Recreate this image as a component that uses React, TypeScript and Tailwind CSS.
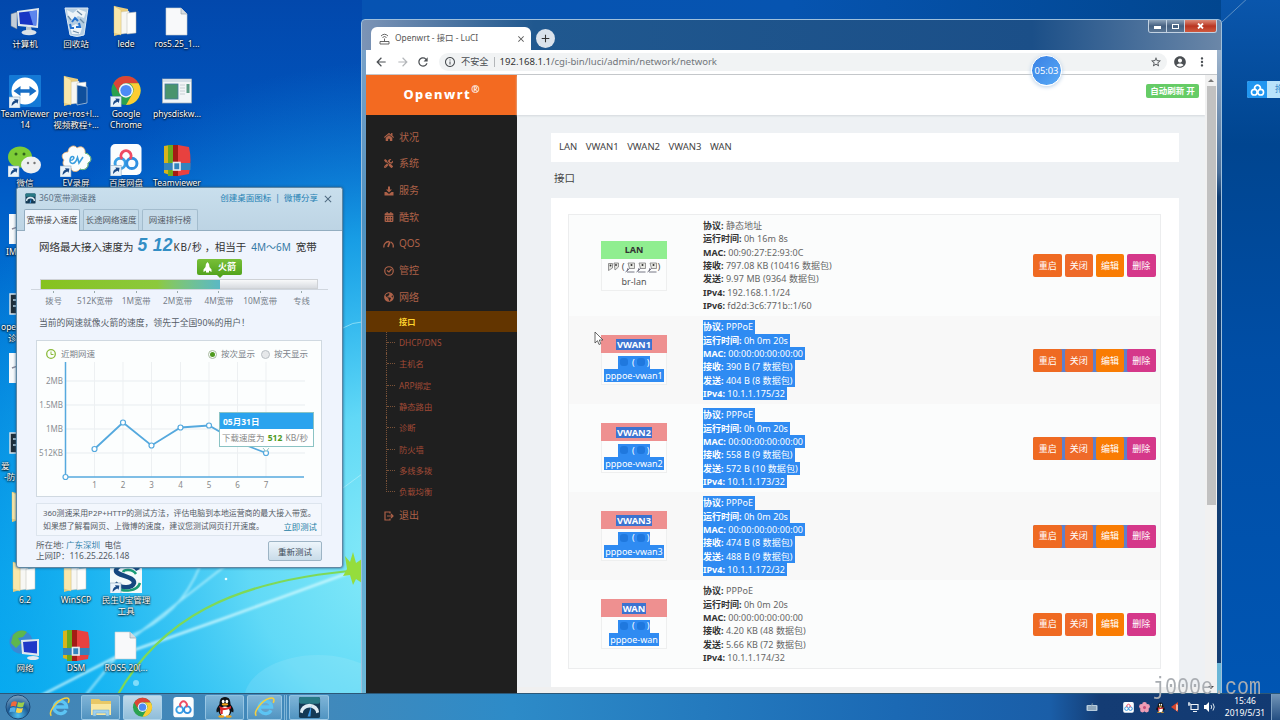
import React from "react";
import { MdArrowBack, MdArrowForward, MdRefresh, MdInfoOutline, MdStarBorder, MdAccountCircle, MdMoreVert, MdClose, MdAdd } from "react-icons/md";
import { FaHome, FaTools, FaCalendarAlt, FaGlobeAmericas } from "react-icons/fa";

/* ---------- drawings ---------- */

function Shortcut() {
  return (
    <g>
      <rect x="0" y="22" width="11" height="11" fill="#e9f3fb" stroke="#8aa5bd" strokeWidth=".6" />
      <path d="M2.6 31c0-3 1-4.700 3.200-5.200L5 24.200l4.400.2-.8 4.400-1.200-1.300c-1.700.4-2.700 1.500-4.800 3.500z" fill="#1a4a86" />
    </g>
  );
}

function Computer() {
  return (
    <svg width="32" height="32" viewBox="0 0 32 32">
      <path d="M2 9l6-2v17l-6-3z" fill="#c3ced8" stroke="#66788c" strokeWidth=".5" />
      <path d="M8 6l22-3-1 20-20-2z" fill="#dfe8ef" />
      <path d="M10 7.500l18-2-.8 15L11 19z" fill="#1734c4" />
      <path d="M20 6.300l8-.8-.8 15-3-.3z" fill="#5c86ee" />
      <path d="M17 22h5l1 4h-6z" fill="#b8c2cc" />
      <ellipse cx="20" cy="27.500" rx="7.500" ry="2.800" fill="#dbe2e8" />
    </svg>
  );
}

function Recycle() {
  return (
    <svg width="32" height="32" viewBox="0 0 32 32">
      <path d="M5 3h23l-4 27q-7 3-14 0z" fill="#b4cde2" stroke="#dceaf5" strokeWidth="1" />
      <path d="M7 5l6 3 5-4 8 3-2 6-6-2-5 4-5-3zM10 22l6-3 6 4-2 6h-8z" fill="#eef4f8" />
      <path d="M8 11l3 4M20 14l4 4M13 26l6 2M17 6l5 4" stroke="#6d8da8" strokeWidth="1.300" />
      <path d="M12 17l3-4 3 3M19 18l1 4h-4M14 23h-3l-1-4" fill="none" stroke="#2472d0" strokeWidth="2" />
    </svg>
  );
}

function Folder({ blue = false }: { blue?: boolean }) {
  return (
    <svg width="32" height="32" viewBox="0 0 32 32">
      <path d="M4 1l14 3v23l-14 4z" fill="#e9cd7e" />
      <path d="M11 7l8-1 1 22-9 1z" fill="#f7f7f4" stroke="#c8c4b4" strokeWidth=".4" />
      <path d="M17 8l9-1v21l-9 1z" fill="#fdfdfb" stroke="#b9b8b0" strokeWidth=".5" />
      {blue && <path d="M17 10l10 2v16l-10 2z" fill="#0f4f9c" stroke="#d0dce8" strokeWidth=".6" />}
      <path d="M4 1l7 4v25l-7-2z" fill="#f8e7ab" stroke="#d9bd68" strokeWidth=".4" />
    </svg>
  );
}

function Page() {
  return (
    <svg width="32" height="32" viewBox="0 0 32 32">
      <path d="M5 3h15l6 6v21H5z" fill="#f8f9fa" stroke="#c6ccd2" strokeWidth=".6" />
      <path d="M20 3v6h6" fill="#d7dce0" stroke="#8f9aa5" strokeWidth=".6" />
    </svg>
  );
}

function TeamViewer() {
  return (
    <svg width="32" height="33" viewBox="0 0 32 33">
      <rect x="0" y="0" width="32" height="32" rx="1" fill="#1479d6" />
      <circle cx="16" cy="16" r="13.500" fill="#fff" />
      <path d="M4.500 16l7-5v3.200h9V11l7 5-7 5v-3.200h-9V21z" fill="#176ec6" />
      <Shortcut />
    </svg>
  );
}

function ChromeLogo({ size = 32, shortcut = false }: { size?: number; shortcut?: boolean }) {
  return (
    <svg width={size} height={size} viewBox="0 0 32 33">
      <circle cx="16" cy="16" r="15" fill="#2aa24f" />
      <path d="M3 8.500A15 15 0 0 1 29 8.500H16a7.500 7.500 0 0 0-6.600 11z" fill="#dc4437" />
      <path d="M29 8.500A15 15 0 0 1 16 31l6.500-11.300A7.500 7.500 0 0 0 19 8.500z" fill="#fccd34" />
      <circle cx="16" cy="16" r="7.400" fill="#f2f6f6" />
      <circle cx="16" cy="16" r="5.800" fill="#4c8bf5" />
      {shortcut && <Shortcut />}
    </svg>
  );
}

function DiskApp() {
  return (
    <svg width="32" height="32" viewBox="0 0 32 32">
      <rect x="1.500" y="4" width="29" height="24" fill="#f2f5f7" stroke="#a4afb8" strokeWidth=".7" />
      <rect x="2" y="4.500" width="28" height="2.500" fill="#d5dfe8" />
      <rect x="4" y="9" width="13" height="15" fill="#4a946e" stroke="#477aa0" strokeWidth=".8" />
      <rect x="25.500" y="9" width="3" height="9" fill="#5a9a83" />
      <path d="M19 10h5M19 13h5M19 16h5M19 19h5" stroke="#bcc5cc" strokeWidth=".8" />
    </svg>
  );
}

function WeChat() {
  return (
    <svg width="34" height="33" viewBox="0 0 34 33">
      <ellipse cx="12" cy="13" rx="12" ry="10.500" fill="#7ccc36" />
      <circle cx="8" cy="10" r="1.500" fill="#31651c" />
      <circle cx="16" cy="10" r="1.500" fill="#31651c" />
      <ellipse cx="23" cy="21" rx="10" ry="8.500" fill="#eef0f1" />
      <circle cx="20" cy="19" r="1.200" fill="#777" />
      <circle cx="26.500" cy="19" r="1.200" fill="#777" />
      <Shortcut />
    </svg>
  );
}

function EvApp() {
  return (
    <svg width="32" height="33" viewBox="0 0 32 33">
      <path d="M8 8c0-6 7-8 9-4 4-3 9 0 8 5 6 1 8 8 3 10 1 5-4 8-8 6-3 4-9 3-9-1-6 1-10-4-7-8-4-4-1-8 4-8z" fill="#fbfdfd" stroke="#f2b26b" strokeWidth=".8" />
      <path d="M25 9c6 1 8 8 3 10 1 5-4 8-8 6" fill="none" stroke="#4fb889" strokeWidth="1" />
      <path d="M10 16.500c4 0 5-4 2.500-4s-4 7 0 7c3 0 4-3 5-6l1.500 5.500 4-6" fill="none" stroke="#3b9ede" strokeWidth="1.600" />
      <Shortcut />
    </svg>
  );
}

function BaiduMark({ mono = false }: { mono?: boolean }) {
  return (
    <g fill="none" strokeWidth="3">
      <circle cx="10" cy="20" r="5.300" stroke={mono ? "#fff" : "#3aa0e6"} />
      <circle cx="22" cy="20" r="5.300" stroke={mono ? "#fff" : "#2f8fe0"} />
      <path d="M12 15.500a5.200 5.200 0 1 1 8 0" stroke={mono ? "#fff" : "#ee4a62"} />
    </g>
  );
}

function Baidu({ size = 32, shortcut = false }: { size?: number; shortcut?: boolean }) {
  return (
    <svg width={size} height={size} viewBox="0 0 32 33">
      <rect width="32" height="32" rx="5" fill="#fbfdfe" />
      <BaiduMark />
      {shortcut && <Shortcut />}
    </svg>
  );
}

function Archive() {
  return (
    <svg width="32" height="33" viewBox="0 0 32 33">
      <path d="M3 2l6-1v30l-6-2z" fill="#d8b41c" />
      <path d="M7 1h6v31H7z" fill="#6da91e" />
      <path d="M12 1h5v31h-5z" fill="#a41c14" />
      <path d="M17 1l11 2q3 13 0 27l-11 2z" fill="#e8413f" />
      <path d="M3 19h26.500v7H3z" fill="#3284bd" />
      <rect x="12.500" y="18.500" width="6.500" height="7.500" fill="none" stroke="#e9edf0" strokeWidth="1.600" />
    </svg>
  );
}

function SBank() {
  return (
    <svg width="32" height="32" viewBox="0 0 32 32">
      <rect width="32" height="32" fill="#f4fafb" />
      <path d="M28 9c-4-7-20-7-22 0-1 6 19 6 18 13-2 6-14 5-19 0" fill="none" stroke="#15477f" strokeWidth="4.500" />
      <path d="M26 13c-3-5-12-5-13-2M30 22c-3 9-17 9-22 5" fill="none" stroke="#1b9c76" strokeWidth="2.500" />
      <Shortcut />
    </svg>
  );
}

function Network() {
  return (
    <svg width="32" height="32" viewBox="0 0 32 32">
      <circle cx="12" cy="13" r="11.500" fill="#3a88d4" />
      <path d="M4 6q7-7 14-3l-4 5-5 1 3 5-5 5-5-5z" fill="#5eb74d" />
      <path d="M12 11l18-1v17l-17-2z" fill="#dfe8ee" />
      <path d="M14 13l14-1v12.500l-13-1.500z" fill="#2038c8" />
      <ellipse cx="24" cy="29" rx="6" ry="2" fill="#e3e9ed" />
    </svg>
  );
}

function DarkApp() {
  return (
    <svg width="32" height="32" viewBox="0 0 32 32">
      <rect x="1" y="6" width="29" height="20" fill="#1e2d38" stroke="#d6e2ea" strokeWidth="1.500" />
      <path d="M4 12h20M4 18h20" stroke="#96b0c0" strokeWidth="2" />
    </svg>
  );
}

function WhiteApp() {
  return (
    <svg width="32" height="32" viewBox="0 0 32 32">
      <rect x="0" y="1" width="31" height="30" fill="#f6f9fb" />
      <path d="M3 16q6-3 12 0" stroke="#889" strokeWidth="1.500" fill="none" />
    </svg>
  );
}

function IeLogo() {
  return (
    <svg width="22" height="22" viewBox="0 0 24 24">
      <path d="M18.500 15.500A6.800 6.800 0 1 1 19.200 12H6.800" fill="none" stroke="#5cc4f4" strokeWidth="3.600" />
      <path d="M2.500 21.500C-1 18 8 5 17 2.500c5-1.400 5.500 1.500 4 5" fill="none" stroke="#f4cf3e" strokeWidth="1.700" />
    </svg>
  );
}

function Explorer() {
  return (
    <svg width="24" height="22" viewBox="0 0 24 22">
      <path d="M2 3h8l2 2h10v14H2z" fill="#e8c866" />
      <path d="M2 8h20v11H2z" fill="#f9e7a0" />
      <path d="M4 20v-6h16v6h-3v-3H7v3z" fill="#9fd0ee" stroke="#6aa8cf" strokeWidth=".5" />
    </svg>
  );
}

function Penguin({ size = 22 }: { size?: number }) {
  return (
    <svg width={size} height={size} viewBox="0 0 24 24">
      <path d="M12 1c-5 0-6 4-6 8-3 4-4 6-3 9l2-1c1 4 3 5 7 5s6-1 7-5l2 1c1-3 0-5-3-9 0-4-1-8-6-8z" fill="#0e1216" />
      <ellipse cx="12" cy="17" rx="5.200" ry="5.500" fill="#fff" />
      <ellipse cx="10" cy="6" rx="1.500" ry="2" fill="#fff" />
      <ellipse cx="14" cy="6" rx="1.500" ry="2" fill="#fff" />
      <ellipse cx="12" cy="9.200" rx="3.500" ry="1.200" fill="#f3a51c" />
      <path d="M5.500 11q6.500 4 13 0v2.500q-5 2-9 2v4H7v-4.500z" fill="#e0272a" />
      <ellipse cx="8" cy="22.300" rx="3.400" ry="1.300" fill="#f3a51c" />
      <ellipse cx="16" cy="22.300" rx="3.400" ry="1.300" fill="#f3a51c" />
    </svg>
  );
}

function Gauge({ size = 22 }: { size?: number }) {
  return (
    <svg width={size} height={size} viewBox="0 0 24 24">
      <rect x="1" y="1" width="22" height="22" rx="2" fill="#143a55" />
      <rect x="1" y="1" width="22" height="7" rx="2" fill="#287a86" />
      <path d="M2 17a10 9 0 0 1 20 0l-3 1a7 6 0 0 0-14 0z" fill="#dcebf2" />
      <path d="M14 10L10 21.500h3z" fill="#3d9be8" />
    </svg>
  );
}

function StartOrb() {
  return (
    <svg width="26" height="26" viewBox="0 0 26 26">
      <defs>
        <radialGradient id="orb" cx=".5" cy=".85" r=".9">
          <stop offset="0" stopColor="#4fc0f0" />
          <stop offset=".5" stopColor="#1c5a94" />
          <stop offset="1" stopColor="#8fb0c8" />
        </radialGradient>
      </defs>
      <circle cx="13" cy="13" r="12" fill="url(#orb)" stroke="#1d4a78" />
      <path d="M6.500 8.500q3-2 5.500-.5l-1 4.500q-3-1-5.500.3z" fill="#f0683a" />
      <path d="M13 8q3 1.500 6.500 0l-1.300 4.700q-3 1.300-6.200-.2z" fill="#9cce4a" />
      <path d="M5.200 14q3-1.500 5.500-.3l-1 4.400q-3-1-5.500.4z" fill="#54aee8" />
      <path d="M11.800 13.800q3 1.400 6.200.2l-1.200 4.300q-3 1.200-6-.1z" fill="#fbd24a" />
    </svg>
  );
}

/* ---------- desktop ---------- */

function Wallpaper() {
  return (
    <svg className="absolute inset-0" width="1280" height="720" viewBox="0 0 1280 720">
      <defs>
        <linearGradient id="sky" x1="0" y1="0" x2="0" y2="1">
          <stop offset="0" stopColor="#0248ac" />
          <stop offset=".25" stopColor="#0059c4" />
          <stop offset=".5" stopColor="#0080dc" />
          <stop offset=".8" stopColor="#00a2ee" />
          <stop offset="1" stopColor="#00b0f4" />
        </linearGradient>
        <radialGradient id="glow" gradientUnits="userSpaceOnUse" cx="400" cy="560" r="500">
          <stop offset="0" stopColor="#88ecf8" />
          <stop offset=".3" stopColor="#66dcf7" stopOpacity=".95" />
          <stop offset=".65" stopColor="#24baf2" stopOpacity=".65" />
          <stop offset="1" stopColor="#1090e0" stopOpacity="0" />
        </radialGradient>
        <linearGradient id="east" x1="0" y1="0" x2="0" y2="1">
          <stop offset="0" stopColor="#0a56ac" />
          <stop offset=".2" stopColor="#004590" />
          <stop offset=".5" stopColor="#004ea6" />
          <stop offset="1" stopColor="#0056b4" />
        </linearGradient>
        <linearGradient id="top" x1="0" y1="0" x2="1" y2="0">
          <stop offset="0" stopColor="#0653b2" />
          <stop offset=".5" stopColor="#0654b0" />
          <stop offset="1" stopColor="#01468f" />
        </linearGradient>
        <filter id="soft"><feGaussianBlur stdDeviation="1.200" /></filter>
      </defs>
      <rect width="1280" height="720" fill="url(#sky)" />
      <rect width="1280" height="720" fill="url(#glow)" />
      <rect x="362" width="860" height="60" fill="url(#top)" />
      <rect x="1221" width="59" height="720" fill="url(#east)" />
      <path d="M1222 22L1250 -4" stroke="#5c8fc4" strokeWidth="1" />
      <g filter="url(#soft)">
        <path d="M40 696L120 655L225 618L362 568" stroke="#d8fbff" strokeOpacity=".8" strokeWidth="2.500" fill="none" />
        <path d="M85 696L130 640L225 566M130 636q50-20 70-70" stroke="#c5f6ff" strokeOpacity=".7" strokeWidth="2" fill="none" />
      </g>
      <path d="M117 696C160 620 230 580 362 570" stroke="#7ed957" strokeWidth="2.200" fill="none" />
      <path d="M345 556l5 6 3-10 3 11 6-4v24l-6-4-3 6-3-10-7 1 4-7z" fill="#95dd3c" />
      <ellipse cx="318" cy="700" rx="74" ry="45" fill="#fff" fillOpacity=".1" />
      <circle cx="226" cy="579" r="1.300" fill="#eaffff" />
      <circle cx="136" cy="683" r="3" fill="#bff4ff" fillOpacity=".6" />
      <path d="M343 328q10-6 19-6M343 488l19-14" stroke="#baf2fa" strokeOpacity=".6" fill="none" />
    </svg>
  );
}

type IconItem = { x: number; y: number; icon: React.ReactNode; label: string; label2?: string; left?: [number, number] };

const icons: IconItem[] = [
  { x: 25, y: 5, icon: <Computer />, label: "计算机" },
  { x: 76, y: 5, icon: <Recycle />, label: "回收站" },
  { x: 126, y: 5, icon: <Folder />, label: "lede" },
  { x: 177, y: 5, icon: <Page />, label: "ros5.25_1..." },
  { x: 25, y: 75, icon: <TeamViewer />, label: "TeamViewer", label2: "14" },
  { x: 76, y: 75, icon: <Folder blue />, label: "pve+ros+l...", label2: "视频教程+..." },
  { x: 126, y: 75, icon: <ChromeLogo shortcut />, label: "Google", label2: "Chrome" },
  { x: 177, y: 75, icon: <DiskApp />, label: "physdiskw..." },
  { x: 25, y: 144, icon: <WeChat />, label: "微信" },
  { x: 76, y: 144, icon: <EvApp />, label: "EV录屏" },
  { x: 126, y: 144, icon: <Baidu shortcut />, label: "百度网盘" },
  { x: 177, y: 144, icon: <Archive />, label: "Teamviewer" },
  { x: 25, y: 213, icon: <WhiteApp />, label: "IM", left: [6, 0] },
  { x: 25, y: 288, icon: <DarkApp />, label: "ope", label2: "诊", left: [1, 8] },
  { x: 25, y: 352, icon: <WhiteApp />, label: "" },
  { x: 25, y: 427, icon: <DarkApp />, label: "爱", label2: "-防", left: [1, 4] },
  { x: 24, y: 491, icon: <Folder />, label: "" },
  { x: 25, y: 561, icon: <Folder />, label: "6.2" },
  { x: 76, y: 561, icon: <Folder />, label: "WinSCP" },
  { x: 126, y: 561, icon: <SBank />, label: "民生U宝管理", label2: "工具" },
  { x: 25, y: 629, icon: <Network />, label: "网络" },
  { x: 76, y: 629, icon: <Archive />, label: "DSM" },
  { x: 126, y: 629, icon: <Page />, label: "ROS5.20(..." },
];

function DesktopIcon({ item }: { item: IconItem }) {
  const pad = item.left;
  return (
    <div className="absolute flex w-[60px] flex-col items-center" style={{ left: item.x - 30, top: item.y - 1 }}>
      <div className="flex h-[34px] items-center justify-center">{item.icon}</div>
      <div className={(pad ? "w-[60px] text-left" : "text-center") + " text-[8.500px] leading-[11px] whitespace-nowrap text-white [text-shadow:0_1px_2px_#000,0_0_2px_#000]"}>
        <div style={pad && { paddingLeft: pad[0] + 5 }}>{item.label}</div>
        {item.label2 && <div style={pad && { paddingLeft: pad[1] + 5 }}>{item.label2}</div>}
      </div>
    </div>
  );
}

/* ---------- speed test window ---------- */

const ticks = ["拨号", "512K宽带", "1M宽带", "2M宽带", "4M宽带", "10M宽带", "专线"];
const points = [[57.5, 108], [86, 81.5], [114.5, 104.5], [143.5, 86.5], [172, 84.5], [200.5, 101], [229, 112]];

function Chart() {
  return (
    <svg className="absolute top-0 left-0 font-['Noto_Sans','Noto_Sans_CJK_SC',sans-serif]" width="284" height="155" viewBox="0 0 284 155">
      <path d="M28 40H268M28 64H268M28 88H268M28 112H268" stroke="#e8edf0" />
      <path d="M57.500 21V136M86 21V136M114.500 21V136M143.500 21V136M172 21V136M200.500 21V136M229 21V136" stroke="#edf0f2" />
      <path d="M28.500 21V136H267" fill="none" stroke="#55a9de" strokeWidth="1.500" />
      <polyline points={points.map((p) => p.join(",")).join(" ")} fill="none" stroke="#55a9de" strokeWidth="1.800" />
      {points.map((p, i) => (
        <g key={i}>
          <circle cx={p[0]} cy={p[1]} r="2.500" fill="#fff" stroke="#55a9de" strokeWidth="1.200" />
          <text x={p[0]} y="146.500" fontSize="8" fill="#888" textAnchor="middle">{i + 1}</text>
        </g>
      ))}
      <circle cx="28.500" cy="136" r="2.500" fill="#fff" stroke="#55a9de" strokeWidth="1.200" />
      <g fontSize="8" fill="#8a8f94" textAnchor="end">
        <text x="26" y="43">2MB</text>
        <text x="26" y="67">1.5MB</text>
        <text x="26" y="91">1MB</text>
        <text x="26" y="115">512KB</text>
      </g>
      <path d="M226 107l3 3.500 3-3.500" fill="#fff" stroke="#7ab8b0" strokeWidth=".8" />
    </svg>
  );
}

function SpeedWindow() {
  return (
    <div className="absolute top-[187px] left-[16px] flex h-[381px] w-[327px] flex-col rounded-[3px] border border-[#5f87a3] bg-[#eff4fd] text-[8.500px] text-[#555c66] shadow-[0_0_3px_#23527a]">
      <div className="h-[43px] shrink-0 rounded-t-[3px] border-b border-[#93adc0] bg-linear-to-b from-[#c9dfed] to-[#bdd4e4]">
        <div className="flex h-[21px] items-center pr-2 pl-2">
          <Gauge size={11} />
          <span className="ml-[3px] text-[#5b7184]">360宽带测速器</span>
          <span className="ml-auto text-[#2380b3]">创建桌面图标</span>
          <span className="mx-[4px] text-[#2380b3]">|</span>
          <span className="text-[#2380b3]">微博分享</span>
          <MdClose className="ml-[4px] text-[#4f6a80]" size={12} />
        </div>
        <div className="flex gap-[3px] pl-[7px] leading-[20px]">
          <div className="h-[22px] w-[56px] rounded-t-[2px] border border-b-0 border-[#93adc0] bg-[#eff5fd] text-center whitespace-nowrap text-[#444]">宽带接入速度</div>
          <div className="h-[21px] w-[56px] rounded-t-[2px] border border-b-0 border-[#a3bccd] bg-[#c6dbe9] text-center whitespace-nowrap">长途网络速度</div>
          <div className="h-[21px] w-[56px] rounded-t-[2px] border border-b-0 border-[#a3bccd] bg-[#c6dbe9] text-center whitespace-nowrap">网速排行榜</div>
        </div>
      </div>

      <div className="flex h-[28px] items-center pt-[5px] pl-[22px] text-[10.500px] whitespace-nowrap text-[#333]">
        <span>网络最大接入速度为</span>
        <span className="-mt-[5px] ml-[4px] w-[36px] font-['Liberation_Sans',sans-serif] text-[17.500px] leading-[18px] font-bold tracking-[.3px] text-[#338ec5] italic">5 12</span>
        <span className="text-[10px] tracking-[.7px]">KB/秒</span>
        <span className="ml-[2px] w-[10px]">，</span>
        <span>相当于</span>
        <span className="ml-[5px] text-[10px] text-[#3579a5]">4M～6M</span>
        <span className="ml-[5px]">宽带</span>
      </div>

      <div className="flex h-[20px] pl-[180px]">
        <div className="relative flex h-[16px] w-[45px] items-center justify-center gap-[6px] rounded-[2px] bg-linear-to-b from-[#78bf38] to-[#52a41d] text-[9px] font-bold text-white">
          <svg width="9" height="11" viewBox="0 0 9 11"><path d="M4.500 0q2.500 2 2 5l2 2.500v2.500L6 8.500v2H3v-2L.5 10V7.500l2-2.500q-.5-3 2-5z" fill="#fff" /></svg>
          <span>火箭</span>
          <div className="absolute -bottom-[3px] left-[19px] h-0 w-0 border-x-4 border-t-4 border-x-transparent border-t-[#52a41d]" />
        </div>
      </div>
      <div className="mx-[14px] h-[11px] border-b border-[#d0d6de] pl-[9px]">
        <div className="h-[10px] w-[278px] border border-[#cfd2d6] bg-linear-to-b from-[#f8f9fa] to-[#d8dbe0]">
          <div className="h-[9px] w-[179px] bg-linear-to-r from-[#86c21d] via-[#8cc93c] via-65% to-[#5bb8c4]" />
        </div>
      </div>
      <div className="mt-px flex h-[20px] pl-[16px]">
        {ticks.map((t) => (
          <div key={t} className="flex w-[41.300px] shrink-0 flex-col items-center whitespace-nowrap text-[#77808a]">
            <div className="h-[2px] w-px bg-[#9aa]" />
            <div className="mt-px text-[8.300px] leading-[13px]">{t}</div>
          </div>
        ))}
      </div>
      <div className="mt-[4px] pl-[22px] text-[8.800px] leading-[16px]">当前的网速就像火箭的速度，领先于全国90%的用户！</div>

      <div className="relative mt-[9px] ml-[19px] h-[157px] w-[286px] shrink-0 border border-[#d0d9e1] bg-[#fcfefe]">
        <div className="flex h-[26px] items-center pl-[9px] text-[#7b828a]">
          <svg width="10" height="10" viewBox="0 0 10 10" fill="none" stroke="#8cbb3c"><circle cx="5" cy="5" r="4.300" strokeWidth="1.300" /><path d="M5 2.500V5.500H7.500" /></svg>
          <span className="ml-[5px]">近期网速</span>
          <span className="ml-auto flex size-[9px] items-center justify-center rounded-full border border-[#a9bba0]"><i className="size-[5px] rounded-full bg-[#4f9a1e]" /></span>
          <span className="ml-[4px]">按次显示</span>
          <span className="ml-[6px] size-[9px] rounded-full border border-[#b9bfc4] bg-[#e6e8ea]" />
          <span className="mr-[13px] ml-[4px]">按天显示</span>
        </div>
        <Chart />
        <div className="absolute top-[71px] left-[182px] h-[35px] w-[95px] border border-[#8bc3c4] bg-white">
          <div className="h-[16px] bg-[#2ba3ee] pl-[3px] text-[8.500px] leading-[17px] font-bold text-white">05月31日</div>
          <div className="pl-[2px] text-[8.500px] leading-[17px] whitespace-nowrap text-[#888]">下载速度为 <b className="mx-[1px] text-[#4f9a1e]">512</b> KB/秒</div>
        </div>
      </div>

      <div className="mt-[6px] ml-[19px] h-[33px] w-[286px] shrink-0 border border-[#dde5ee] bg-[#f3f7fd] pt-[3px] pl-[6px] text-[7.900px] leading-[13px] whitespace-nowrap">
        <div>360测速采用P2P+HTTP的测试方法，评估电脑到本地运营商的最大接入带宽。</div>
        <div className="flex justify-between pr-[4px]"><span>如果想了解看网页、上微博的速度，建议您测试网页打开速度。</span><span className="text-[8.400px] text-[#2380a5]">立即测试</span></div>
      </div>
      <div className="flex justify-between pt-[3px] pr-[20px] pl-[19px]">
        <div className="leading-[11px]">
          <div>所在地: <span className="text-[#3a86ad]">广东深圳</span>&nbsp; 电信</div>
          <div className="tracking-[-.020px]">上网IP：116.25.226.148</div>
        </div>
        <div className="mt-[2px] h-[20px] w-[54px] rounded-[2px] border border-[#9db4c5] bg-linear-to-b from-[#edf5fb] to-[#c9dce9] text-center leading-[19px] text-[#3c4a57]">重新测试</div>
      </div>
    </div>
  );
}

/* ---------- router page ---------- */

function Save() {
  return <svg width="10" height="10" viewBox="0 0 20 20" fill="currentColor"><path d="M8 1h4v6h4l-6 6-6-6h4zM1 12h4l5 4 5-4h4v7H1z" /></svg>;
}
function Dash() {
  return <svg width="11" height="10" viewBox="0 0 22 18" fill="none" stroke="currentColor" strokeWidth="2.600"><path d="M2 16a10 10 0 0 1 10-12M16 5a9.500 9.500 0 0 1 4 11" /><path d="M14 4L10 15" strokeWidth="3.500" /></svg>;
}
function Check() {
  return <svg width="10" height="10" viewBox="0 0 20 20" fill="none" stroke="currentColor" strokeWidth="2.400"><circle cx="10" cy="10" r="8.500" /><path d="M6 9l4 3 5-6" /></svg>;
}
function Exit() {
  return <svg width="10" height="10" viewBox="0 0 20 20" fill="none" stroke="currentColor" strokeWidth="2.400"><path d="M12 5V2H2v16h10v-3M6 10h12M14 6l4 4-4 4" /></svg>;
}

const menu: [React.ReactNode, string][] = [
  [<FaHome size={10} />, "状况"],
  [<FaTools size={9} />, "系统"],
  [<Save />, "服务"],
  [<FaCalendarAlt size={10} />, "酷软"],
  [<Dash />, "QOS"],
  [<Check />, "管控"],
  [<FaGlobeAmericas size={10} />, "网络"],
];
const sub = ["DHCP/DNS", "主机名", "ARP绑定", "静态路由", "诊断", "防火墙", "多线多拨", "负载均衡"];

function MenuRow({ icon, text }: { icon: React.ReactNode; text: string }) {
  return (
    <div className="flex h-[26.660px] items-center pl-[17px] text-[10px] text-[#ad6148]">
      <span className="flex w-[11px] justify-center">{icon}</span>
      <span className="ml-[5px]">{text}</span>
    </div>
  );
}

function Sidebar() {
  return (
    <div className="flex w-[151px] shrink-0 flex-col bg-[#1f1f1f]">
      <div className="flex h-[40px] items-center justify-center bg-[#f36a21] font-['Noto_Sans',sans-serif] text-[12.800px] font-extrabold tracking-[1.500px] text-white">
        <span>Openwrt</span>
        <span className="-mt-[11px] text-[10px] font-bold tracking-normal">®</span>
      </div>
      <div className="pt-[9px]">
        {menu.map(([icon, text]) => <MenuRow key={text} icon={icon} text={text} />)}
        <div className="h-[21.330px] bg-[#633500] pl-[33px] text-[8.200px] leading-[21px] font-bold text-[#ffd22e]">接口</div>
        <div className="ml-[20px]">
          {sub.map((s, i) => (
            <div key={s} className="flex h-[21.330px] text-[8.300px] leading-[22px] text-[#a14a36]">
              <div className={i === sub.length - 1 ? "h-[11px] w-[9px] border-b border-l border-dotted border-[#7a5238]" : "w-[9px] border-l border-dotted border-[#7a5238]"}>
                {i < sub.length - 1 && <div className="h-[11px] border-b border-dotted border-[#7a5238]" />}
              </div>
              <span className="ml-[4px]">{s}</span>
            </div>
          ))}
        </div>
        <MenuRow icon={<Exit />} text="退出" />
      </div>
    </div>
  );
}

type Iface = { name: string; dev: string; lines: [string, string][]; state: "up" | "picked" | "plain" };

const ifaces: Iface[] = [
  { name: "LAN", dev: "br-lan", state: "up", lines: [["协议", "静态地址"], ["运行时间", "0h 16m 8s"], ["MAC", "00:90:27:E2:93:0C"], ["接收", "797.08 KB (10416 数据包)"], ["发送", "9.97 MB (9364 数据包)"], ["IPv4", "192.168.1.1/24"], ["IPv6", "fd2d:3c6:771b::1/60"]] },
  { name: "VWAN1", dev: "pppoe-vwan1", state: "picked", lines: [["协议", "PPPoE"], ["运行时间", "0h 0m 20s"], ["MAC", "00:00:00:00:00:00"], ["接收", "390 B (7 数据包)"], ["发送", "404 B (8 数据包)"], ["IPv4", "10.1.1.175/32"]] },
  { name: "VWAN2", dev: "pppoe-vwan2", state: "picked", lines: [["协议", "PPPoE"], ["运行时间", "0h 0m 20s"], ["MAC", "00:00:00:00:00:00"], ["接收", "558 B (9 数据包)"], ["发送", "572 B (10 数据包)"], ["IPv4", "10.1.1.173/32"]] },
  { name: "VWAN3", dev: "pppoe-vwan3", state: "picked", lines: [["协议", "PPPoE"], ["运行时间", "0h 0m 20s"], ["MAC", "00:00:00:00:00:00"], ["接收", "474 B (8 数据包)"], ["发送", "488 B (9 数据包)"], ["IPv4", "10.1.1.172/32"]] },
  { name: "WAN", dev: "pppoe-wan", state: "plain", lines: [["协议", "PPPoE"], ["运行时间", "0h 0m 20s"], ["MAC", "00:00:00:00:00:00"], ["接收", "4.20 KB (48 数据包)"], ["发送", "5.66 KB (72 数据包)"], ["IPv4", "10.1.1.174/32"]] },
];

function Port() {
  return (
    <svg width="11" height="11" viewBox="0 0 22 22">
      <path d="M6 2h13v11H9z" fill="#e8e9e4" stroke="#777" strokeWidth="1.500" />
      <path d="M1 20q4-1 5-8M4 20h15M9 13L4 18" fill="none" stroke="#667" strokeWidth="1.800" />
      <circle cx="13" cy="6" r="2" fill="#333" />
    </svg>
  );
}

function Bridge() {
  return (
    <svg width="11" height="10" viewBox="0 0 22 20">
      <path d="M1 3h8v9l-8 5zM12 2h9v8l-7 6z" fill="#e2e3df" stroke="#777" strokeWidth="1.500" />
      <circle cx="5" cy="7" r="1.800" fill="#333" />
      <circle cx="16" cy="6" r="1.800" fill="#333" />
    </svg>
  );
}

function Badge({ it }: { it: Iface }) {
  const up = it.state === "up";
  return (
    <div className="flex h-[50px] w-[66px] flex-col items-center border border-t-0 border-[#eeefef] bg-white/40">
      <div className={up ? "w-[66px] bg-[#90ee90] text-center text-[9px] leading-[18px] font-bold text-[#333]" : "flex h-[18px] w-[66px] shrink-0 items-center justify-center bg-[#ee9090] text-[9.300px] font-bold text-white"}>
        {up ? it.name : <span className="bg-[#3c73d0] px-[1px] leading-[11px]">{it.name}</span>}
      </div>
      {up ? (
        <>
          <div className="flex h-[17px] items-center text-[9.500px] text-[#555]">
            <Bridge />
            <span className="ml-[3px]">(</span>
            <Port /><Port /><Port />
            <span>)</span>
          </div>
          <div className="text-[9px] leading-[11px] text-[#555]">{it.dev}</div>
        </>
      ) : (
        <>
          <div className="mt-[2.500px] flex h-[13px] w-[32px] shrink-0 items-center bg-[#2f8bf2] text-[9px] text-white">
            <i className="ml-[2px] size-[8px] rounded-[3px] bg-[#1f78de]" />
            <span className="ml-[4px]">(</span>
            <i className="mx-[2px] size-[8px] rounded-[3px] bg-[#1f78de]" />
            <span>)</span>
          </div>
          <div className="h-[13.500px] shrink-0 bg-[#2f8bf2] px-[1px] text-[9px] leading-[14px] whitespace-nowrap text-white">{it.dev}</div>
        </>
      )}
    </div>
  );
}

function Row({ it, odd }: { it: Iface; odd: boolean }) {
  const picked = it.state === "picked";
  const btn = "flex h-[23px] w-[28.500px] items-center justify-center rounded-[2px] text-[9px] text-white ";
  return (
    <div className={odd ? "flex items-center bg-[#f8f8f8] py-[4px] pl-[32px]" : "flex items-center bg-[#fbfcfc] py-[4px] pl-[32px]"}>
      <Badge it={it} />
      <div className="ml-[36px] text-[9px] leading-[13.330px]">
        {it.lines.map(([k, v]) => (
          <div key={k} className="h-[13.330px] whitespace-nowrap">
            <span className={picked ? "inline-block h-[13.500px] bg-[#2f8bf2] pr-[2px] text-white" : "inline-block text-[#666]"}>
              <b className={picked ? "" : "text-[#333]"}>{k}:</b> <span className="tracking-[.060px]">{v}</span>
            </span>
          </div>
        ))}
      </div>
      <div className={picked ? "mr-[4.500px] ml-auto flex gap-[2.700px] rounded-[2px] bg-[#5e80cc]" : "mr-[4.500px] ml-auto flex gap-[2.700px]"}>
        <div className={btn + "bg-[#ef6a22]"}>重启</div>
        <div className={btn + "bg-[#ef6a2a]"}>关闭</div>
        <div className={btn + "bg-[#f97c03]"}>编辑</div>
        <div className={btn + "bg-[#d5388a]"}>删除</div>
      </div>
    </div>
  );
}

function RouterPage() {
  return (
    <div className="flex h-[618px] overflow-hidden bg-[#eef1f4]">
      <Sidebar />
      <div className="flex w-[688px] shrink-0 flex-col">
        <div className="flex h-[40px] shrink-0 justify-end bg-white pt-[9px] pr-[6px] shadow-[0_1px_2px_#d4d8dc]">
          <div className="h-[14px] w-[53px] rounded-[2px] bg-[#66cc66] text-center text-[8.500px] leading-[14px] font-bold whitespace-nowrap text-white">自动刷新 开</div>
        </div>
        <div className="mt-[18px] ml-[34px] flex h-[29px] w-[628px] shrink-0 items-center gap-[8.500px] bg-white pl-[8px] text-[9.500px] text-[#444]">
          <span>LAN</span><span>VWAN1</span><span>VWAN2</span><span>VWAN3</span><span>WAN</span>
        </div>
        <div className="ml-[37px] h-[36px] shrink-0 text-[10.500px] leading-[33px] text-[#444]">接口</div>
        <div className="ml-[34px] h-[489px] w-[628px] shrink-0 bg-white pt-[16px] pr-[18px] pl-[17px]">
          <div className="border border-[#ecedee]">
            {ifaces.map((it, i) => <Row key={it.name} it={it} odd={i % 2 === 1} />)}
          </div>
        </div>
        <div className="h-[6px] bg-[#f0f0f0]" />
      </div>
      <div className="flex w-[12px] flex-col items-center bg-[#f1f1f1]">
        <div className="flex h-[11px] items-center"><div className="border-x-[3px] border-b-[3px] border-x-transparent border-b-[#777]" /></div>
        <div className="h-[419px] w-[9px] bg-[#c1c1c1]" />
        <div className="mt-auto mb-[4px] border-x-[3px] border-t-[3px] border-x-transparent border-t-[#444]" />
      </div>
    </div>
  );
}

function Browser() {
  return (
    <div className="absolute top-[19px] left-[361px] h-[675px] w-[861px] rounded-t-[4px] border border-[#9fc0dc] bg-linear-to-b from-[#7fa4c9] from-0% via-[#4f92c0] via-30% to-[#6cb8d8] px-[4px]">
      <div className="absolute inset-y-[30px] right-0 w-[4px] bg-[linear-gradient(180deg,#9db4cd,#4b6f98_20%,#0e3c72_24%,#143f74)]" />
      <div className="-mx-[4px] flex h-[30px] rounded-t-[4px] bg-[linear-gradient(90deg,#7c94b6,#20588f_20%,#1b4f88_78%,#6b87a8)] pl-[9px]">
        <div className="mt-[7px] flex h-[23px] w-[160px] items-center rounded-t-[6px] bg-white px-[8px] text-[8.400px] text-[#555]">
          <svg width="11" height="12" viewBox="0 0 22 24" fill="none" stroke="#555" strokeWidth="1.800"><path d="M4 6q7-7 14 0M7 9q4-4 8 0M11 11v6M2 17h18v5H2z" /></svg>
          <span className="ml-[5px] whitespace-nowrap">Openwrt - 接口 - LuCI</span>
          <MdClose className="mr-[-3px] ml-auto" size={10} />
        </div>
        <div className="mt-[9px] ml-[5px] flex size-[19px] items-center justify-center rounded-full bg-[#dbe3ec] text-[#333]"><MdAdd size={13} /></div>
        <div className="mr-[4px] ml-auto flex h-[13px] overflow-hidden rounded-b-[3px] border border-t-0 border-[#c3d2e2] text-white">
          <div className="flex w-[18px] items-center justify-center border-r border-[#c3d2e2] bg-linear-to-b from-[#8ea3ba] via-[#466080] to-[#5b7796]"><i className="mt-[3px] h-[3px] w-[7px] bg-white" /></div>
          <div className="flex w-[18px] items-center justify-center border-r border-[#c3d2e2] bg-linear-to-b from-[#8ea3ba] via-[#466080] to-[#5b7796]"><i className="h-[5px] w-[7px] border-[1.500px] border-white" /></div>
          <div className="flex w-[31px] items-center justify-center bg-linear-to-b from-[#dc8a78] via-[#b93421] to-[#d05a3f]">
            <svg width="7" height="6" viewBox="0 0 7 6"><path d="M1 .5l5 5M6 .5l-5 5" stroke="#fff" strokeWidth="1.800" /></svg>
          </div>
        </div>
      </div>
      <div className="relative flex h-[25px] items-center border-b border-[#c4c7ca] bg-white text-[#4b4f53]">
        <MdArrowBack className="ml-[8px]" size={14} />
        <MdArrowForward className="ml-[8px] text-[#b3b6b9]" size={14} />
        <MdRefresh className="ml-[6px]" size={14} />
        <div className="ml-[9px] flex h-[18px] w-[728px] items-center rounded-full bg-[#f1f3f4] pr-[5px] pl-[5px] text-[9.550px]">
          <MdInfoOutline size={12} />
          <span className="ml-[5px] text-[9.200px]">不安全</span>
          <i className="mx-[5px] h-[10px] w-px bg-[#b3b6b9]" />
          <span className="text-[#333]">192.168.1.1</span><span className="text-[#70757a]">/cgi-bin/luci/admin/network/network</span>
          <MdStarBorder className="ml-auto" size={12} />
        </div>
        <MdAccountCircle className="ml-[6px]" size={14} />
        <MdMoreVert className="ml-[8px]" size={14} />
      </div>
      <div className="relative"><RouterPage /></div>
    </div>
  );
}

/* ---------- taskbar ---------- */

function Taskbar() {
  const open = "flex h-[25px] items-center justify-center rounded-[2px] border border-[#a9d3ec]/70 bg-linear-to-b ";
  const idle = "from-[#9ac8e4]/70 to-[#5b9cc6]/60";
  return (
    <div className="absolute bottom-0 left-0 flex h-[27px] w-full items-center border-t border-[#2c5878] bg-[linear-gradient(90deg,#4285b6,#4189bb_25%,#2d8bc8_40%,#1b69b4_70%,#1a5ea8_82%,#143c74_86%,#123a72)]">
      <div className="ml-[5px] w-[26px]"><StartOrb /></div>
      <div className="ml-[18px] w-[22px]"><IeLogo /></div>
      <div className={open + idle + " ml-[10px] w-[39px]"}><Explorer /></div>
      <div className={open + " ml-[3px] w-[39px] from-[#dfeef6]/80 to-[#a3cbe2]/80"}><ChromeLogo size={21} /></div>
      <div className="mx-[11px]"><Baidu size={21} /></div>
      <div className={open + idle + " w-[39px]"}><Penguin /></div>
      <div className={open + idle + " ml-[3px] w-[35px]"}><IeLogo /></div>
      <div className="ml-[2px] h-[25px] w-[3px] border-x border-[#a9d3ec]/60" />
      <div className={open + idle + " ml-[2px] w-[40px]"}><Gauge size={23} /></div>
      <div className="ml-auto flex h-full items-center">
        <svg width="12" height="10" viewBox="0 0 12 10"><rect x=".5" y="3" width="11" height="6" rx="1" fill="#b8ccdc" /><path d="M5 3q3 0 1-2M2 5h8M2 7h8" stroke="#64819b" fill="none" /></svg>
        <div className="ml-[25px]"><Baidu size={11} /></div>
        <svg className="ml-[5px]" width="11" height="11" viewBox="0 0 11 11" fill="#ef9db5"><circle cx="5.500" cy="2.500" r="2.400" /><circle cx="8.500" cy="4.500" r="2.400" /><circle cx="7.500" cy="8" r="2.400" /><circle cx="3.500" cy="8" r="2.400" /><circle cx="2.500" cy="4.500" r="2.400" /><circle cx="5.500" cy="5.500" r="1.500" fill="#c84e78" /></svg>
        <div className="ml-[5px]"><Penguin size={11} /></div>
        <svg className="ml-[5px]" width="9" height="10" viewBox="0 0 9 10"><path d="M0 5l7-5v10z" fill="#d8452c" /><path d="M5 2l2 1v5l-2 1" fill="#f0b5a0" /></svg>
        <svg className="ml-[8px]" width="11" height="10" viewBox="0 0 11 10" fill="none" stroke="#eef4f8" strokeWidth="1.200"><path d="M3 2.500h7v5H3zM5 9.500h4M1 0v4M0 2h3" /></svg>
        <svg className="ml-[5px]" width="11" height="10" viewBox="0 0 11 10"><path d="M0 3h2l3-3v10L2 7H0z" fill="#fff" /><path d="M7 3q1.500 2 0 4M9 1.500q2.500 3.500 0 7" fill="none" stroke="#dce8f0" /></svg>
        <div className="ml-[8px] w-[44px] text-center text-[8.500px] leading-[12px] whitespace-nowrap text-white">
          <div>15:46</div>
          <div>2019/5/31</div>
        </div>
        <div className="ml-[4px] h-full w-[9px] border-l border-[#7c9fc0] bg-linear-to-b from-[#7396b8] to-[#244f82]" />
      </div>
    </div>
  );
}

export default function App() {
  return (
    <div className="relative h-[720px] w-[1280px] overflow-hidden font-['Noto_Sans','Noto_Sans_CJK_SC',sans-serif]">
      <Wallpaper />
      {icons.map((item, i) => <DesktopIcon key={i} item={item} />)}
      <SpeedWindow />
      <Browser />
      <svg className="absolute top-[331px] left-[594px]" width="10" height="15" viewBox="0 0 10 15"><path d="M1 1v11l2.500-2.300L5 13.500l1.800-.8L5.300 9H9z" fill="#fff" stroke="#444" strokeWidth=".8" /></svg>
      <div className="absolute top-[55px] left-[1031px] flex size-[31px] items-center justify-center rounded-full border border-white bg-linear-to-br from-[#3a80e4] to-[#58aaf6] text-[9.300px] text-white shadow-[0_1px_4px_#b9cfe6]">05:03</div>
      <div className="absolute top-[81px] left-[1247px] flex h-[17px] w-[33px] overflow-hidden rounded-l-[2px] bg-[#b9e3fb] text-[9px] leading-[16px] text-[#3a8fd0]">
        <div className="flex w-[20px] shrink-0 items-center justify-center bg-[#2196f0]"><svg width="15" height="15" viewBox="2 1 28 28"><BaiduMark mono /></svg></div>
        <span className="ml-[8px] whitespace-nowrap">拖</span>
      </div>
      <Taskbar />
      <div className="absolute top-[675px] left-[1153px] origin-top scale-y-[1.2] font-['Liberation_Mono',monospace] text-[20px] leading-[22px] text-[#a9adb2]">j000e.com</div>
    </div>
  );
}
